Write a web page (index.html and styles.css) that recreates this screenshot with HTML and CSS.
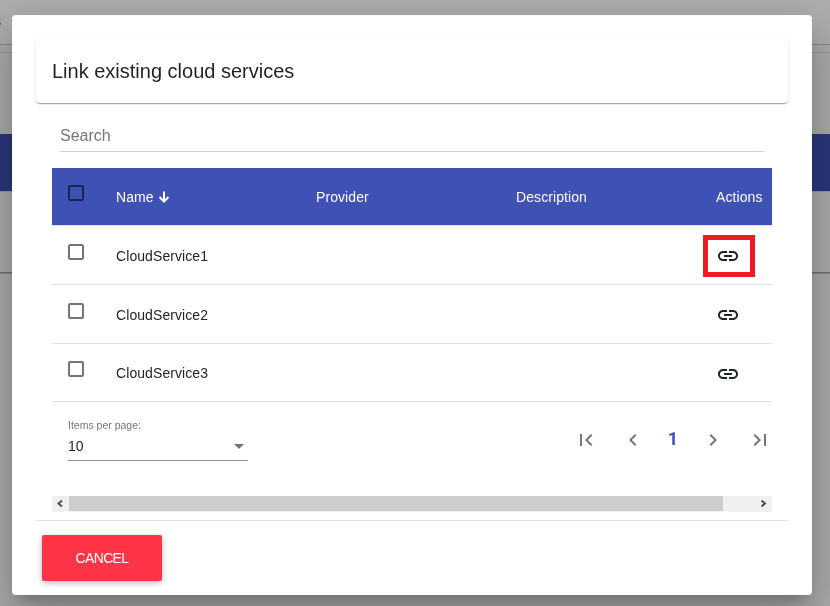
FILE: index.html
```html
<!DOCTYPE html>
<html lang="en">
<head>
<meta charset="utf-8">
<title>Link existing cloud services</title>
<link rel="stylesheet" href="styles.css">
</head>
<body>
<svg class="defs" width="0" height="0" aria-hidden="true">
  <symbol id="link" viewBox="0 0 24 24"><path d="M3.9 12c0-1.71 1.39-3.1 3.1-3.1h4V7H7c-2.76 0-5 2.24-5 5s2.24 5 5 5h4v-1.9H7c-1.71 0-3.1-1.39-3.1-3.1zM8 13h8v-2H8v2zm9-6h-4v1.9h4c1.71 0 3.1 1.39 3.1 3.1s-1.39 3.1-3.1 3.1h-4V17h4c2.76 0 5-2.24 5-5s-2.24-5-5-5z"/></symbol>
</svg>
<div class="page">
  <div class="page-top"><span class="page-link">s</span></div>
  <div class="page-gap"></div>
  <div class="page-title"></div>
  <div class="page-head"></div>
  <div class="page-row"></div>
</div>
<div class="backdrop">
  <section class="dialog" role="dialog">
    <h1 class="title">Link existing cloud services</h1>
    <div class="content">
      <div class="search">Search</div>
      <div class="table">
        <div class="row head">
          <span class="check"></span>
          <span class="cell">Name<svg class="sort" width="12" height="12" viewBox="0 0 12 12"><path d="M6 .5v10M1.500 6 6 10.500 10.500 6"/></svg></span>
          <span class="cell">Provider</span>
          <span class="cell">Description</span>
          <span class="cell">Actions</span>
        </div>
        <div class="row">
          <span class="check"></span>
          <span class="cell">CloudService1</span><span class="cell"></span><span class="cell"></span>
          <span class="action marked"><svg width="24" height="24"><use href="#link"/></svg></span>
        </div>
        <div class="row">
          <span class="check"></span>
          <span class="cell">CloudService2</span><span class="cell"></span><span class="cell"></span>
          <span class="action"><svg width="24" height="24"><use href="#link"/></svg></span>
        </div>
        <div class="row last">
          <span class="check"></span>
          <span class="cell">CloudService3</span><span class="cell"></span><span class="cell"></span>
          <span class="action"><svg width="24" height="24"><use href="#link"/></svg></span>
        </div>
      </div>
      <div class="paginator">
        <div class="page-size">
          <div class="label">Items per page:</div>
          <div class="value">10<span class="caret"></span></div>
        </div>
        <div class="pages">
          <svg width="24" height="24" viewBox="0 0 24 24"><path d="M18.41 16.59L13.82 12l4.59-4.59L17 6l-6 6 6 6zM6 6h2v12H6z"/></svg>
          <svg width="24" height="24" viewBox="0 0 24 24"><path d="M15.41 7.41L14 6l-6 6 6 6 1.41-1.41L10.83 12z"/></svg>
          <b class="current">1</b>
          <svg width="24" height="24" viewBox="0 0 24 24"><path d="M10 6L8.59 7.41 13.17 12l-4.58 4.59L10 18l6-6z"/></svg>
          <svg class="end" width="24" height="24" viewBox="0 0 24 24"><path d="M5.59 7.41L10.18 12l-4.59 4.59L7 18l6-6-6-6zM16 6h2v12h-2z"/></svg>
        </div>
      </div>
      <div class="scrollbar">
        <svg width="17" height="16" viewBox="0 0 17 16"><path d="M10 4.500 6.500 7.500l3.500 3"/></svg>
        <div class="thumb"></div>
        <svg width="17" height="16" viewBox="0 0 17 16"><path d="M6.500 4.500l3.500 3-3.500 3"/></svg>
      </div>
    </div>
    <footer class="footer"><button class="cancel">CANCEL</button></footer>
  </section>
</div>
</body>
</html>
```
FILE: styles.css
```css
* { box-sizing: border-box; }
body {
  margin: 0;
  height: 606px;
  overflow: hidden;
  background: #fafafa;
  color: #212529;
  font: 14px/20px "Liberation Sans", Arial, sans-serif;
}
.defs { position: absolute; }
svg { display: block; flex: none; }

.page-top { height: 45px; padding-top: 11px; border-bottom: 1px solid #c8c8c8; background: #fff; }
.page-link { display: block; margin-left: -6px; color: #1b87d8; }
.page-gap { height: 7px; }
.page-title { height: 82px; border-top: 1px solid #e4e4e4; }
.page-head { height: 57px; background: #3f51b5; }
.page-row { height: 82px; border-top: 1px solid #e0e0e0; border-bottom: 1px solid #a5a5a5; box-shadow: 0 1px 1px #ccc; }

.backdrop { position: fixed; inset: 0; padding: 15px 18px 11px 12px; background: rgba(0, 0, 0, .32); }
.dialog {
  height: 580px;
  padding: 24px;
  border-radius: 4px;
  background: #fff;
  box-shadow: 0 11px 15px -7px rgba(0, 0, 0, .2), 0 24px 38px 3px rgba(0, 0, 0, .14), 0 9px 46px 8px rgba(0, 0, 0, .12);
}
.title {
  height: 64px;
  margin: 0;
  padding: 16px;
  border-radius: 4px;
  font-size: 20px;
  font-weight: 400;
  line-height: 32px;
  color: rgba(0, 0, 0, .87);
  box-shadow: 0 2px 1px -1px rgba(0, 0, 0, .2), 0 1px 1px 0 rgba(0, 0, 0, .14), 0 1px 3px 0 rgba(0, 0, 0, .12);
}
.content { padding: 0 16px; }
.search {
  height: 31px;
  margin: 18px 8px 16px;
  padding-top: 5px;
  border-bottom: 1px solid #ced4da;
  font-size: 16px;
  color: #767676;
}

.row {
  display: grid;
  grid-template-columns: 48px 200px 200px 200px 1fr;
  height: 59px;
  padding-left: 16px;
  border-bottom: 1px solid #dee2e6;
}
.row.head { height: 58px; background: #3f51b5; background-clip: padding-box; color: #fff; }
.row.last { height: 58px; }
.check { width: 16px; height: 16px; margin-top: 18px; border: 2px solid #757575; border-radius: 2px; }
.head .check { margin-top: 17px; border-color: #1c2551; }
.last .check { margin-top: 17px; }
.cell { display: flex; align-items: center; height: 20px; margin-top: 20px; letter-spacing: .08px; }
.head .cell { margin-top: 19px; }
.last .cell { margin-top: 19px; }
.sort { margin-left: 4px; fill: none; stroke: #fff; stroke-width: 2; }
.action { position: relative; width: 24px; height: 24px; margin-top: 18px; fill: #212529; }
.marked::after { content: ""; position: absolute; inset: -9px -15px -9px -13px; border: 5px solid #ed1c24; }

.paginator { display: flex; justify-content: space-between; height: 94px; padding-left: 16px; }
.page-size { width: 180px; height: 59px; padding-top: 15px; border-bottom: 1px solid #949494; }
.label { font-size: 10.5px; line-height: 16px; color: #757575; }
.value { display: flex; align-items: center; justify-content: space-between; height: 24px; padding-top: 2px; }
.caret { margin-right: 4px; border: 5px solid transparent; border-top-color: #757575; border-bottom: 0; }
.pages { display: flex; align-items: center; width: 198px; height: 24px; margin-top: 26px; fill: #757575; }
.pages svg + svg { margin-left: 23px; }
.current { width: 56px; margin-top: -2px; text-align: center; font: 700 18px/20px Roboto, sans-serif; color: #3f51b5; }

.scrollbar { display: flex; height: 16px; background: #f0f0f0; fill: none; stroke: #505050; stroke-width: 2; }
.thumb { width: 654px; height: 15px; margin-right: 32px; background: #cdcdcd; }
.footer { margin-top: 8px; padding: 14px 6px; border-top: 1px solid #dfdfdf; }
.cancel {
  display: block;
  width: 120px;
  height: 46px;
  padding: 0;
  border: 0;
  border-radius: 2px;
  background: #ff3547;
  color: #fff;
  font: 14px "Liberation Sans", Arial, sans-serif;
  letter-spacing: -.65px;
  box-shadow: 0 2px 5px rgba(0, 0, 0, .16), 0 2px 10px rgba(0, 0, 0, .12);
}
```
